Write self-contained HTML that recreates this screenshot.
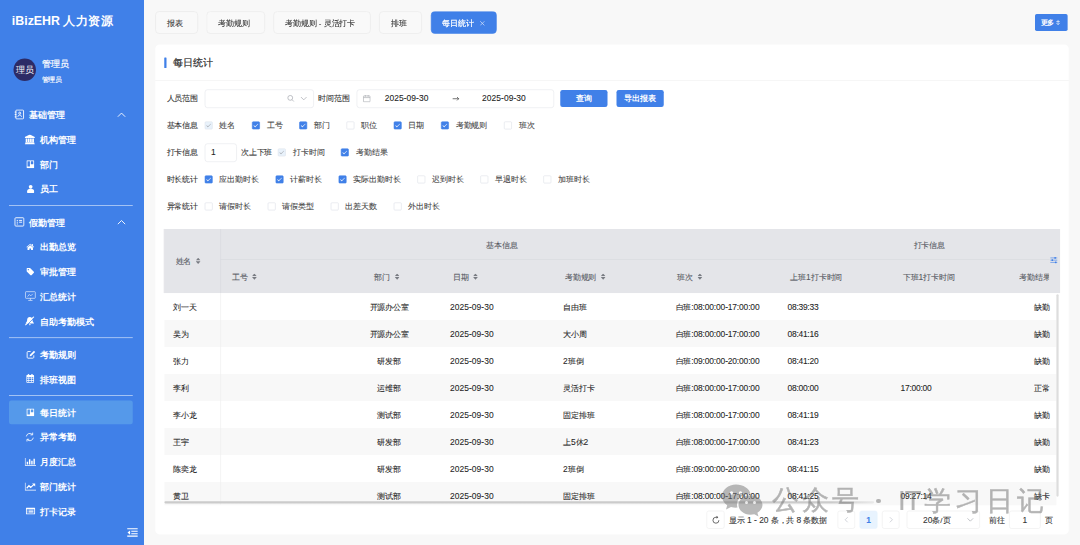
<!DOCTYPE html>
<html lang="zh">
<head>
<meta charset="utf-8">
<title>iBizEHR 人力资源</title>
<style>
*{box-sizing:border-box;margin:0;padding:0}
html,body{width:1080px;height:545px;overflow:hidden;background:#f8f8f8;font-family:"Liberation Sans",sans-serif;}
#app{position:absolute;left:0;top:0;width:1920px;height:969px;transform:scale(.5625);transform-origin:0 0;opacity:.9999;font-size:14px;color:#2b2b2b;}
.abs{position:absolute}
/* sidebar */
#side{position:absolute;left:0;top:0;width:256px;height:969px;background:#4080e8;color:#fff}
#side .title{position:absolute;left:21px;top:22px;font-size:22px;font-weight:bold;line-height:30px;white-space:nowrap}
#side .avatar{position:absolute;left:24px;top:104px;width:40px;height:40px;border-radius:50%;background:#2c2b66;color:#fff;font-size:16px;line-height:40px;text-align:center;overflow:hidden;white-space:nowrap}
#side .uname{-webkit-text-stroke:.35px;position:absolute;left:74px;top:102px;font-size:16px;line-height:24px;white-space:nowrap}
#side .usub{-webkit-text-stroke:.25px;position:absolute;left:74px;top:132px;font-size:12px;line-height:18px;white-space:nowrap}
.mi{position:absolute;left:0;width:256px;height:44px;line-height:44px;font-size:16px;font-weight:bold;white-space:nowrap}
.mi .tx{position:absolute;left:71.3px;top:1px}
.mi.g .tx{left:52px}
.mi svg{position:absolute;left:44px;top:13.500px;width:18px;height:18px;fill:#fff}
.mi.g svg.ic{left:24.5px;top:12px;width:19px;height:19px}
.mi.g svg.chev{left:208px;top:16px;width:16px;height:12px;fill:none;stroke:#fff;stroke-width:1.6}
.sel{position:absolute;left:16px;top:712px;width:220px;height:42px;background:#5599ea;border-radius:4px}
.dv{position:absolute;left:16px;width:220px;height:1px;background:rgba(255,255,255,.92)}
/* tabs */
.tab{position:absolute;top:20px;height:40px;border:1px solid #e6e6e6;border-radius:7px;background:#f9f9f9;line-height:40px;padding-right:6.6px;text-align:center;font-size:14px;color:#333;white-space:nowrap}
.tab.on{background:#4080e8;border-color:#4080e8;color:#fff;-webkit-text-stroke:.4px}
.btn{position:absolute;background:#4080e8;color:#fff;border-radius:4px;text-align:center;font-size:14px;white-space:nowrap}
/* panel */
#panel{position:absolute;left:276px;top:79px;width:1624px;height:871px;background:#fff;border-radius:8px}
.lbl,.t{margin-top:-.5px}
.cb{margin-top:.3px}
.lbl{position:absolute;left:20px;font-size:14px;line-height:20px;color:#333;white-space:nowrap}
.inp{position:absolute;height:33px;border:1px solid #e3e5ea;border-radius:5px;background:#fff}
.t{position:absolute;font-size:14px;line-height:20px;color:#444;white-space:nowrap}
.cb{position:absolute;width:14px;height:14px;border:1px solid #dcdfe6;border-radius:2px;background:#fff}
.cb.on{background:#4080e8;border-color:#4080e8}
.cb.dis{background:#e9f2fb;border-color:#dde3ec}
.cb.on:after,.cb.dis:after{content:"";position:absolute;left:4px;top:1px;width:3px;height:7px;border:1.6px solid #fff;border-left:0;border-top:0;transform:rotate(45deg)}
.cb.dis:after{border-color:#a8abb2}
/* table */
#tb{position:absolute;left:16px;top:328px;width:1593px;height:490.500px;overflow:hidden}
#th{position:absolute;left:0;top:0;width:1593px;height:113.5px;background:#e4e5e9}
.hl{position:absolute;background:#d6d8dd}
.ht{-webkit-text-stroke:.15px;position:absolute;font-size:14px;line-height:20px;color:#55585f;white-space:nowrap}
.srt{display:inline-block;position:relative;width:8.500px;height:11.500px;margin-left:8px;vertical-align:middle;margin-top:-3px}
.srt:before,.srt:after{content:"";position:absolute;left:0;width:8.500px;height:5.200px;background:#787b82}
.srt:before{top:0;clip-path:polygon(50% 0,100% 100%,0 100%)}
.srt:after{top:6.300px;clip-path:polygon(0 0,100% 0,50% 100%)}
.row{position:absolute;left:0;width:1586px;height:48px}
.row.s{background:#f8f8f8}
.c{position:absolute;top:15px;font-size:14px;line-height:20px;color:#1f1f1f;white-space:nowrap}
.c.ct{text-align:center}
.n{font-size:15px}.n.d{letter-spacing:.09px}.n.tm{letter-spacing:-.45px}.n.sh{letter-spacing:-.27px}
.c,.t,.lbl,.pg,.tab{-webkit-text-stroke:.15px}
/* pagination */
.pg{position:absolute;top:829px;height:32px;line-height:30px;font-size:14px;color:#333;white-space:nowrap}
.pbx{border:1px solid #ececec;border-radius:4px;text-align:center;background:#fff}
/* watermark */
.wm{position:absolute;color:#727272;-webkit-text-stroke:.45px #727272;font-size:27.400px;line-height:30px;white-space:nowrap}
</style>
</head>
<body>
<div id="app">
<div id="side">
  <div class="title">iBizEHR 人力资源</div>
  <div class="avatar">理员</div>
  <div class="uname">管理员</div>
  <div class="usub">管理员</div>
  <div class="sel"></div>
  <div class="mi g" style="top:181.600px"><svg class="ic" viewBox="0 0 18 18"><g fill="none" stroke="#fff" stroke-width="1.500"><rect x="3" y="1.500" width="13" height="15" rx="1.500"/><circle cx="9.500" cy="6.800" r="1.700"/><path d="M6.500 12.800c0-1.800 1.200-2.800 3-2.800s3 1 3 2.800"/><path d="M1 5h3M1 9h3M1 13h3"/></g></svg><span class="tx">基础管理</span><svg class="chev" viewBox="0 0 16 12"><path d="M1.500 9.500L8 3l6.500 6.500"/></svg></div>
  <div class="mi" style="top:225.600px"><svg viewBox="0 0 16 16"><path d="M8 0l8 4v1.700H0V4zM1.500 6.300h2.700V12H1.500zM5 6.300h2.600V12H5zM8.400 6.300H11V12H8.400zM11.800 6.300h2.700V12h-2.700zM1 12.500h14v1.700H1zM0 14.500h16V16H0z"/></svg><span class="tx">机构管理</span></div>
  <div class="mi" style="top:269.600px"><svg viewBox="0 0 14 14" style="left:47px;top:15px;width:14px;height:14px"><path fill-rule="evenodd" d="M1.200 0h11.600A1.200 1.200 0 0 1 14 1.200v11.600a1.200 1.200 0 0 1-1.200 1.200H1.200A1.200 1.200 0 0 1 0 12.800V1.200A1.200 1.200 0 0 1 1.200 0zM1.800 1.800v9.200h4.400V1.800zM7.800 1.800v5.200h4.400V1.800z"/></svg><span class="tx">部门</span></div>
  <div class="mi" style="top:313.600px"><svg viewBox="0 0 14 16" style="left:47.500px;top:14px;width:13px;height:15.500px"><circle cx="7" cy="4" r="3.600"/><path d="M0 14c0-4.500 2.500-6.300 7-6.300s7 1.800 7 6.300c0 1.200-.8 2-2 2H2c-1.200 0-2-.8-2-2z"/></svg><span class="tx">员工</span></div>
  <div class="dv" style="top:364.500px"></div>
  <div class="mi g" style="top:372.600px"><svg class="ic" viewBox="0 0 18 18"><g fill="none" stroke="#fff" stroke-width="1.500"><rect x="1.500" y="2" width="15" height="14" rx="1.500"/><path d="M4.500 6.500h2M4.500 9.500h2M4.500 12.500h2M8.500 6.500h5M8.500 9.500h5"/></g></svg><span class="tx">假勤管理</span><svg class="chev" viewBox="0 0 16 12"><path d="M1.500 9.500L8 3l6.500 6.500"/></svg></div>
  <div class="mi" style="top:416.600px"><svg viewBox="0 0 16 16" style="left:46px;top:14.500px;width:15.500px;height:15.500px"><path d="M8 2.200L1 8.200l.9 1L8 4l6.100 5.200.9-1-2.200-1.900V2.800H11v2zM3 9.500l5-4.200 5 4.200V14H9.500v-3h-3v3H3z"/></svg><span class="tx">出勤总览</span></div>
  <div class="mi" style="top:460.600px"><svg viewBox="0 0 16 16" style="left:46px;top:14.500px;width:15.500px;height:15.500px"><path fill-rule="evenodd" d="M1.500 2.500v4.300c0 .5.200 1 .6 1.400l6.400 6.400c.5.500 1.300.5 1.800 0l4.300-4.300c.5-.5.500-1.300 0-1.800L8.200 2.100c-.4-.4-.9-.6-1.400-.6H2.500c-.6 0-1 .4-1 1zM4.500 5.700a1.200 1.200 0 1 1 0-2.400 1.200 1.200 0 0 1 0 2.400z"/></svg><span class="tx">审批管理</span></div>
  <div class="mi" style="top:504.600px"><svg viewBox="0 0 16 16" style="width:20px;height:20px;top:11px"><g fill="none" stroke="#fff" stroke-width=".85"><rect x="1" y="2" width="14" height="9.500" rx="1"/><path d="M8 11.500V14M5 14.500h6M4 9l2.500-3 2 2L11.500 5"/></g></svg><span class="tx">汇总统计</span></div>
  <div class="mi" style="top:548.600px"><svg viewBox="0 0 16 16"><path d="M8 1.500c-2.500 0-4.200 1.900-4.200 4.300 0 3-1.300 4.200-2.300 5v1h13v-1c-1-.8-2.300-2-2.300-5C12.200 3.400 10.500 1.500 8 1.500zM6.500 13a1.500 1.500 0 0 0 3 0z"/><path d="M2.200 15.200L15.500 2" stroke="#4080e8" stroke-width="1.300"/><path d="M1 14.300L14.500 .8" stroke="#fff" stroke-width="1.700"/></svg><span class="tx">自助考勤模式</span></div>
  <div class="dv" style="top:599.500px"></div>
  <div class="mi" style="top:607.600px"><svg viewBox="0 0 16 16" style="left:45.500px;top:13px"><path fill="none" stroke="#fff" stroke-width="1.400" d="M12.500 9.500v3.200c0 .7-.6 1.300-1.300 1.300H3.300c-.7 0-1.300-.6-1.300-1.300V4.800c0-.7.600-1.300 1.300-1.300h4.200"/><path d="M6.500 8.500l6.300-6.300 1.900 1.900-6.300 6.300-2.400.5z"/></svg><span class="tx">考勤规则</span></div>
  <div class="mi" style="top:651.600px"><svg viewBox="0 0 16 16" preserveAspectRatio="none" style="left:46px;top:12.500px;width:15.500px;height:17.500px"><path fill-rule="evenodd" d="M2 2.500h12a1 1 0 0 1 1 1V14a1 1 0 0 1-1 1H2a1 1 0 0 1-1-1V3.500a1 1 0 0 1 1-1zM2.300 6v2h2.500V6zm3.600 0v2h4.200V6zm5.300 0v2h2.500V6zM2.300 9v2h2.500V9zm3.600 0v2h4.200V9zm5.300 0v2h2.500V9zM2.300 12v1.800h2.500V12zm3.600 0v1.800h4.200V12zm5.300 0v1.800h2.500V12z"/><rect x="4" y=".5" width="1.600" height="3.500" rx=".8"/><rect x="10.400" y=".5" width="1.600" height="3.500" rx=".8"/></svg><span class="tx">排班视图</span></div>
  <div class="dv" style="top:702.500px"></div>
  <div class="mi" style="top:710.600px"><svg viewBox="0 0 14 14" style="left:47px;top:15px;width:14px;height:14px"><path fill-rule="evenodd" d="M1.200 0h11.600A1.200 1.200 0 0 1 14 1.200v11.600a1.200 1.200 0 0 1-1.200 1.200H1.200A1.200 1.200 0 0 1 0 12.800V1.200A1.200 1.200 0 0 1 1.200 0zM1.800 1.800v9.200h4.400V1.800zM7.800 1.800v5.200h4.400V1.800z"/></svg><span class="tx">每日统计</span></div>
  <div class="mi" style="top:754.600px"><svg viewBox="0 0 16 16"><g fill="none" stroke="#fff" stroke-width="1.300"><path d="M2.500 7A5.500 5.500 0 0 1 12 4M13.500 9A5.500 5.500 0 0 1 4 12"/><path d="M12.500 1v3.500H9M3.500 15v-3.500H7"/></g></svg><span class="tx">异常考勤</span></div>
  <div class="mi" style="top:798.600px"><svg viewBox="0 0 20 16" style="width:20px;height:16px;top:14.500px"><path d="M0 1h1.400v12.600H20V15H0zM3.500 8h2.500v4.600H3.500zM7.500 3.500H10v9.100H7.500zM11.500 6H14v6.600h-2.500zM15.500 2.500H18v10.100h-2.500z"/></svg><span class="tx">月度汇总</span></div>
  <div class="mi" style="top:842.600px"><svg viewBox="0 0 20 16" style="width:20px;height:16px;top:14.500px"><path d="M0 1h1.400v12.600H20V15H0z"/><path d="M3.500 11l4-4.500 3 3L16.500 4" fill="none" stroke="#fff" stroke-width="2.100"/><path d="M13 2.500h5.500V8z"/></svg><span class="tx">部门统计</span></div>
  <div class="mi" style="top:886.600px"><svg viewBox="0 0 16 16" preserveAspectRatio="none" style="left:45px;top:14.500px;width:18.500px;height:15px"><path fill-rule="evenodd" d="M1.500 2h13a.5.500 0 0 1 .5.500v11a.5.500 0 0 1-.5.500h-13a.5.500 0 0 1-.5-.5v-11a.5.500 0 0 1 .5-.5zM2.300 4.500v8.200h11.400V4.500z"/><path d="M3.500 5.800h1.200V7H3.500zM5.500 5.800h7V7h-7zM3.500 8h1.200v1.200H3.500zM5.500 8h7v1.200h-7zM3.500 10.200h1.200v1.200H3.500zM5.500 10.200h7v1.200h-7z"/></svg><span class="tx">打卡记录</span></div>
  <svg class="abs" style="left:226px;top:938px;width:19px;height:17.500px" viewBox="0 0 18 16" preserveAspectRatio="none"><path d="M0 1h18v1.800H0zM7 5h11v1.800H7zM7 9h11v1.800H7zM0 13h18v1.800H0zM5 4.500v7L.5 8z" fill="#fff"/></svg>
</div>
<div id="main">
  <div class="tab" style="left:276px;width:76px">报表</div>
  <div class="tab" style="left:367px;width:104px">考勤规则</div>
  <div class="tab" style="left:486px;width:173px">考勤规则 - 灵活打卡</div>
  <div class="tab" style="left:674px;width:76px">排班</div>
  <div class="tab on" style="left:766px;width:117px;text-align:left;padding-left:19.500px">每日统计<svg style="position:absolute;left:85.500px;top:15.500px;width:9px;height:9px" viewBox="0 0 9 9"><path d="M.8 .8l7.400 7.400M8.200 .8L.8 8.200" stroke="#dbe6fb" stroke-width="1.200" fill="none"/></svg></div>
  <div class="btn" style="left:1840px;top:25px;width:58px;height:30px;line-height:30px;font-size:12px;font-weight:bold;border-radius:3px;text-align:left;padding-left:10px">更多<svg style="position:absolute;left:37px;top:10px;width:8px;height:10px" viewBox="0 0 8 10"><path d="M4 0v8.500M.8 5.500L4 9l3.200-3.500M1 3.200h6" fill="none" stroke="#e4ecfb" stroke-width="1.300"/></svg></div>
  <div id="panel">
    <div class="abs" style="left:16px;top:23px;width:4px;height:19px;background:#4080e8;border-radius:1px"></div>
    <div class="abs" style="left:31px;top:20px;font-size:18px;line-height:26px;color:#2a2a2a;-webkit-text-stroke:.3px;white-space:nowrap">每日统计</div>
    <div class="abs" style="left:0;top:64px;width:1624px;height:1px;background:#efefef"></div>
    <!-- row 1 -->
    <div class="lbl" style="top:86px">人员范围</div>
    <div class="inp" style="left:88px;top:80px;width:194px"></div>
    <svg class="abs" style="left:234px;top:89px;width:14px;height:14px" viewBox="0 0 14 14"><g fill="none" stroke="#a8abb2" stroke-width="1.300"><circle cx="6" cy="6" r="4.300"/><path d="M9.200 9.200L12.500 12.500"/></g></svg>
    <svg class="abs" style="left:257px;top:91px;width:14px;height:10px" viewBox="0 0 14 10"><path d="M2 2.500l5 5 5-5" fill="none" stroke="#a8abb2" stroke-width="1.300"/></svg>
    <div class="lbl" style="left:290px;top:86px">时间范围</div>
    <div class="inp" style="left:358px;top:80px;width:351px"></div>
    <svg class="abs" style="left:369px;top:89px;width:14px;height:14px" viewBox="0 0 14 14"><g fill="none" stroke="#a8abb2" stroke-width="1.200"><rect x="1" y="2.500" width="12" height="10.500" rx="1"/><path d="M1 5.500h12M4.500 1v3M9.500 1v3"/></g></svg>
    <div class="t" style="left:408px;top:86px;color:#222"><span class="n d">2025-09-30</span></div>
    <svg class="abs" style="left:528px;top:91px;width:13px;height:10px" viewBox="0 0 13 10"><path d="M.5 5.500h11M8.500 2.500l3 3-3 3" fill="none" stroke="#333" stroke-width="1.200"/></svg>
    <div class="t" style="left:581px;top:86px;color:#222"><span class="n d">2025-09-30</span></div>
    <div class="btn" style="left:720px;top:81px;width:84px;height:30px;line-height:30px;font-weight:bold">查询</div>
    <div class="btn" style="left:820px;top:81px;width:84px;height:30px;line-height:30px;font-weight:bold">导出报表</div>
    <!-- row 2 -->
    <div class="lbl" style="top:134px">基本信息</div>
    <div class="cb dis" style="left:88px;top:137px"></div><div class="t" style="left:114px;top:134px">姓名</div>
    <div class="cb on" style="left:172px;top:137px"></div><div class="t" style="left:198px;top:134px">工号</div>
    <div class="cb on" style="left:256px;top:137px"></div><div class="t" style="left:282px;top:134px">部门</div>
    <div class="cb" style="left:340px;top:137px"></div><div class="t" style="left:366px;top:134px">职位</div>
    <div class="cb on" style="left:424px;top:137px"></div><div class="t" style="left:450px;top:134px">日期</div>
    <div class="cb on" style="left:508px;top:137px"></div><div class="t" style="left:534px;top:134px">考勤规则</div>
    <div class="cb" style="left:620px;top:137px"></div><div class="t" style="left:646px;top:134px">班次</div>
    <!-- row 3 -->
    <div class="lbl" style="top:182px">打卡信息</div>
    <div class="inp" style="left:88px;top:176px;width:57px"></div><div class="t n" style="left:99px;top:182px;color:#222">1</div>
    <div class="t" style="left:152px;top:182px;color:#333">次上下班</div>
    <div class="cb dis" style="left:218px;top:185px"></div><div class="t" style="left:245px;top:182px">打卡时间</div>
    <div class="cb on" style="left:330px;top:185px"></div><div class="t" style="left:357px;top:182px">考勤结果</div>
    <!-- row 4 -->
    <div class="lbl" style="top:230px">时长统计</div>
    <div class="cb on" style="left:88px;top:233px"></div><div class="t" style="left:114px;top:230px">应出勤时长</div>
    <div class="cb on" style="left:214px;top:233px"></div><div class="t" style="left:240px;top:230px">计薪时长</div>
    <div class="cb on" style="left:326px;top:233px"></div><div class="t" style="left:352px;top:230px">实际出勤时长</div>
    <div class="cb" style="left:466px;top:233px"></div><div class="t" style="left:492px;top:230px">迟到时长</div>
    <div class="cb" style="left:578px;top:233px"></div><div class="t" style="left:604px;top:230px">早退时长</div>
    <div class="cb" style="left:690px;top:233px"></div><div class="t" style="left:716px;top:230px">加班时长</div>
    <!-- row 5 -->
    <div class="lbl" style="top:278px">异常统计</div>
    <div class="cb" style="left:88px;top:281px"></div><div class="t" style="left:114px;top:278px">请假时长</div>
    <div class="cb" style="left:200px;top:281px"></div><div class="t" style="left:226px;top:278px">请假类型</div>
    <div class="cb" style="left:312px;top:281px"></div><div class="t" style="left:338px;top:278px">出差天数</div>
    <div class="cb" style="left:424px;top:281px"></div><div class="t" style="left:450px;top:278px">外出时长</div>
    <div class="abs" style="left:15px;top:328px;width:2px;height:113.500px;background:#e4e5e9"></div>
    <div id="tb">
     <div id="th">
      <div class="hl" style="left:100px;top:0;width:1px;height:113.5px"></div>
      <div class="hl" style="left:100px;top:54px;width:1474px;height:1px"></div>
      <div class="ht" style="left:20px;top:47px">姓名<i class="srt"></i></div>
      <div class="ht" style="left:560px;top:19px;width:80px;text-align:center">基本信息</div>
      <div class="ht" style="left:1320px;top:19px;width:80px;text-align:center">打卡信息</div>
      <div class="ht" style="left:120px;top:75px">工号<i class="srt"></i></div>
      <div class="ht" style="left:303px;top:75px;width:186px;text-align:center">部门<i class="srt"></i></div>
      <div class="ht" style="left:513px;top:75px">日期<i class="srt"></i></div>
      <div class="ht" style="left:712px;top:75px">考勤规则<i class="srt"></i></div>
      <div class="ht" style="left:912px;top:75px">班次<i class="srt"></i></div>
      <div class="ht" style="left:1113px;top:75px">上班<span class="n">1</span>打卡时间</div>
      <div class="ht" style="left:1313px;top:75px">下班<span class="n">1</span>打卡时间</div>
      <div class="ht" style="left:1520px;top:75px;width:53px;overflow:hidden">考勤结果</div>
      <svg class="abs" style="left:1575px;top:48.500px;width:13px;height:13px" viewBox="0 0 13 13"><g stroke="#4080e8" stroke-width="1.100" fill="none"><path d="M0 2.500h13M0 6.500h13M0 10.500h13"/></g><g fill="#4080e8"><rect x="7.500" y="1" width="2.600" height="3"/><rect x="2.500" y="5" width="2.600" height="3"/><rect x="8.500" y="9" width="2.600" height="3"/></g></svg>
     </div>
     <div class="row" style="top:113.5px">
      <div class="c" style="left:16px">刘一天</div>
      <div class="c ct" style="left:307px;width:186px">开源办公室</div>
      <div class="c" style="left:508px"><span class="n d">2025-09-30</span></div>
      <div class="c" style="left:709px">自由班</div>
      <div class="c" style="left:909px">白班<span class="n sh">:08:00:00-17:00:00</span></div>
      <div class="c" style="left:1108px"><span class="n tm">08:39:33</span></div>
      <div class="c ct" style="left:1530px;width:60px">缺勤</div>
     </div>
     <div class="row s" style="top:161.5px">
      <div class="c" style="left:16px">吴为</div>
      <div class="c ct" style="left:307px;width:186px">开源办公室</div>
      <div class="c" style="left:508px"><span class="n d">2025-09-30</span></div>
      <div class="c" style="left:709px">大小周</div>
      <div class="c" style="left:909px">白班<span class="n sh">:08:00:00-17:00:00</span></div>
      <div class="c" style="left:1108px"><span class="n tm">08:41:16</span></div>
      <div class="c ct" style="left:1530px;width:60px">缺勤</div>
     </div>
     <div class="row" style="top:209.5px">
      <div class="c" style="left:16px">张力</div>
      <div class="c ct" style="left:307px;width:186px">研发部</div>
      <div class="c" style="left:508px"><span class="n d">2025-09-30</span></div>
      <div class="c" style="left:709px"><span class="n">2</span>班倒</div>
      <div class="c" style="left:909px">白班<span class="n sh">:09:00:00-20:00:00</span></div>
      <div class="c" style="left:1108px"><span class="n tm">08:41:20</span></div>
      <div class="c ct" style="left:1530px;width:60px">缺勤</div>
     </div>
     <div class="row s" style="top:257.5px">
      <div class="c" style="left:16px">李利</div>
      <div class="c ct" style="left:307px;width:186px">运维部</div>
      <div class="c" style="left:508px"><span class="n d">2025-09-30</span></div>
      <div class="c" style="left:709px">灵活打卡</div>
      <div class="c" style="left:909px">白班<span class="n sh">:08:00:00-17:00:00</span></div>
      <div class="c" style="left:1108px"><span class="n tm">08:00:00</span></div>
      <div class="c" style="left:1309px"><span class="n tm">17:00:00</span></div>
      <div class="c ct" style="left:1530px;width:60px">正常</div>
     </div>
     <div class="row" style="top:305.5px">
      <div class="c" style="left:16px">李小龙</div>
      <div class="c ct" style="left:307px;width:186px">测试部</div>
      <div class="c" style="left:508px"><span class="n d">2025-09-30</span></div>
      <div class="c" style="left:709px">固定排班</div>
      <div class="c" style="left:909px">白班<span class="n sh">:08:00:00-17:00:00</span></div>
      <div class="c" style="left:1108px"><span class="n tm">08:41:19</span></div>
      <div class="c ct" style="left:1530px;width:60px">缺勤</div>
     </div>
     <div class="row s" style="top:353.5px">
      <div class="c" style="left:16px">王宇</div>
      <div class="c ct" style="left:307px;width:186px">研发部</div>
      <div class="c" style="left:508px"><span class="n d">2025-09-30</span></div>
      <div class="c" style="left:709px">上<span class="n">5</span>休<span class="n">2</span></div>
      <div class="c" style="left:909px">白班<span class="n sh">:08:00:00-17:00:00</span></div>
      <div class="c" style="left:1108px"><span class="n tm">08:41:23</span></div>
      <div class="c ct" style="left:1530px;width:60px">缺勤</div>
     </div>
     <div class="row" style="top:401.5px">
      <div class="c" style="left:16px">陈奕龙</div>
      <div class="c ct" style="left:307px;width:186px">研发部</div>
      <div class="c" style="left:508px"><span class="n d">2025-09-30</span></div>
      <div class="c" style="left:709px"><span class="n">2</span>班倒</div>
      <div class="c" style="left:909px">白班<span class="n sh">:09:00:00-20:00:00</span></div>
      <div class="c" style="left:1108px"><span class="n tm">08:41:15</span></div>
      <div class="c ct" style="left:1530px;width:60px">缺勤</div>
     </div>
     <div class="row s" style="top:449.5px">
      <div class="c" style="left:16px">黄卫</div>
      <div class="c ct" style="left:307px;width:186px">测试部</div>
      <div class="c" style="left:508px"><span class="n d">2025-09-30</span></div>
      <div class="c" style="left:709px">固定排班</div>
      <div class="c" style="left:909px">白班<span class="n sh">:08:00:00-17:00:00</span></div>
      <div class="c" style="left:1108px"><span class="n tm">08:41:25</span></div>
      <div class="c" style="left:1309px"><span class="n tm">09:27:14</span></div>
      <div class="c ct" style="left:1530px;width:60px">缺卡</div>
     </div>
     <div class="abs" style="left:100px;top:113.5px;width:1px;height:376px;background:#ececec"></div>
         <div class="abs" style="left:1586px;top:116px;width:4px;height:360px;background:#dddddd;border-radius:2px"></div>
     <div class="abs" style="left:0;top:484px;width:1262px;height:4.300px;background:linear-gradient(90deg,#cbcbcb 0,#cbcbcb 94%,#e9e9e9 100%);border-radius:2px"></div>
    </div>
    <div class="pg pbx" style="left:980px;width:32px"><svg style="position:absolute;left:7.500px;top:6.500px;width:15.500px;height:16.500px" viewBox="0 0 13 14"><path d="M11 7.500A4.500 4.500 0 1 1 6.500 3H9" fill="none" stroke="#555" stroke-width="1.300"/><path d="M7.500 .800L10 3 7.500 5.200z" fill="#555"/></svg></div>
    <div class="pg" style="left:1020px;line-height:32px">显示 <span class="n">1 - 20</span> 条，共 <span class="n">8</span> 条数据</div>
    <div class="pg pbx" style="left:1213px;width:31px;color:#c0c4cc"><svg style="position:absolute;left:10px;top:9px;width:10px;height:12px" viewBox="0 0 10 12"><path d="M7 1.500L2.500 6 7 10.500" fill="none" stroke="#c0c4cc" stroke-width="1.300"/></svg></div>
    <div class="pg pbx" style="left:1252px;width:32px;background:#e8f3fe;border-color:#e8f3fe;color:#4080e8;font-weight:bold"><span class="n">1</span></div>
    <div class="pg pbx" style="left:1292px;width:31px"><svg style="position:absolute;left:10px;top:9px;width:10px;height:12px" viewBox="0 0 10 12"><path d="M3 1.500L7.500 6 3 10.500" fill="none" stroke="#c0c4cc" stroke-width="1.300"/></svg></div>
    <div class="pg pbx" style="left:1336px;width:130px;text-align:left;padding-left:28px"><span class="n">20</span>条/页<svg style="position:absolute;left:105px;top:10px;width:14px;height:10px" viewBox="0 0 14 10"><path d="M2 2.500l5 5 5-5" fill="none" stroke="#a8abb2" stroke-width="1.300"/></svg></div>
    <div class="pg" style="left:1482px;line-height:32px">前往</div>
    <div class="pg pbx" style="left:1518px;width:56px"><span class="n">1</span></div>
    <div class="pg" style="left:1582px;line-height:32px">页</div>
  </div>
</div>
</div>
<div id="wm" style="opacity:.52">
<svg class="abs" style="left:721px;top:484px;width:42px;height:34px" viewBox="0 0 42 34"><g fill="#7a7a7a"><path d="M15 .5C7.300 .5 1 5.700 1 12.200c0 3.700 2 6.900 5.200 9.100L5 25.500l5-2.500c1.600.5 3.300.7 5 .7.500 0 1 0 1.500-.1-.3-1-.5-2-.5-3.100 0-6 5.700-10.800 12.700-10.800h.8C28.300 4.600 22.300 .5 15 .5z"/><path d="M41.500 21c0-5.300-5.400-9.700-12-9.700S17.500 15.700 17.500 21s5.400 9.700 12 9.700c1.300 0 2.600-.2 3.800-.5l4.200 2.300-1.100-3.800c3-1.800 5.100-4.600 5.100-7.700z"/></g><g fill="#fff"><circle cx="10.500" cy="9" r="1.700"/><circle cx="19.500" cy="9" r="1.700"/><circle cx="25.500" cy="18.500" r="1.500"/><circle cx="33.500" cy="18.500" r="1.500"/></g></svg>
<div class="wm" style="left:772.300px;top:485.200px;letter-spacing:3.100px">公众号</div>
<div class="abs" style="left:875.800px;top:498.600px;width:4.800px;height:4.800px;border-radius:50%;background:#727272"></div>
<div class="wm" style="left:898px;top:485.500px;letter-spacing:-1px;font-size:27.500px;-webkit-text-stroke:.2px #727272">IT</div>
<div class="wm" style="left:924.200px;top:485.500px;letter-spacing:4px">学习日记</div>
</div>
</body>
</html>
